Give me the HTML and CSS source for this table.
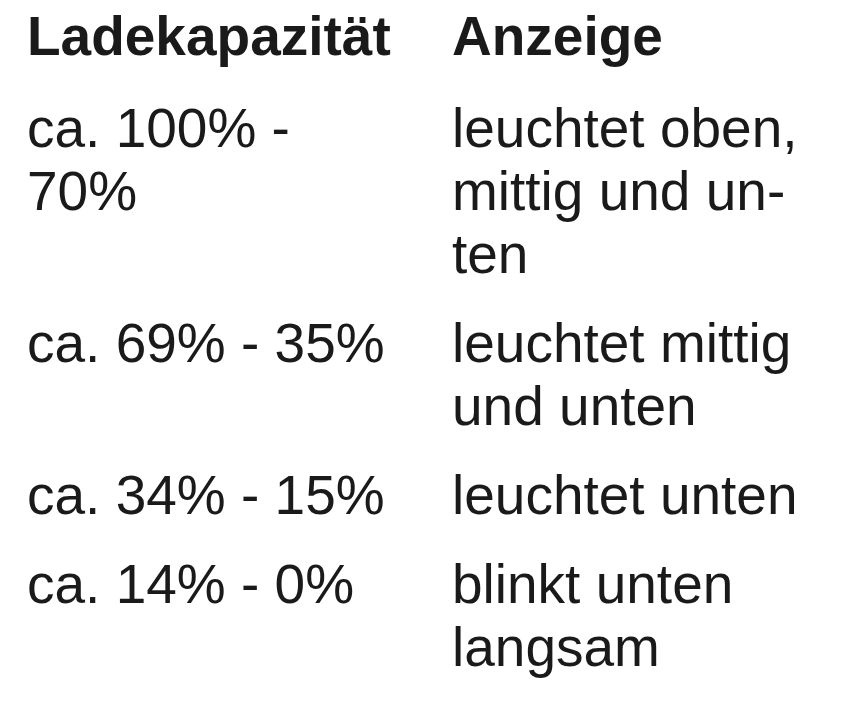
FILE: index.html
```html
<!DOCTYPE html>
<html lang="de">
<head>
<meta charset="utf-8">
<title>Ladekapazität</title>
<link rel="stylesheet" href="styles.css">
</head>
<body>
<div class="table">
  <div class="cell head">Ladekapazität</div>
  <div class="cell head">Anzeige</div>
  <div class="cell">ca. 100% - 70%</div>
  <div class="cell">leuchtet oben, mittig und un&shy;ten</div>
  <div class="cell">ca. 69% - 35%</div>
  <div class="cell">leuchtet mittig und unten</div>
  <div class="cell">ca. 34% - 15%</div>
  <div class="cell">leuchtet unten</div>
  <div class="cell">ca. 14% - 0%</div>
  <div class="cell">blinkt unten langsam</div>
</div>
</body>
</html>
```

FILE: styles.css
```css
html, body {
  margin: 0;
  padding: 0;
  background: #ffffff;
}

body {
  font-family: "Liberation Sans", Arial, sans-serif;
  color: #1a1a1a;
  font-size: 55px;
  line-height: 63px;
}

.table {
  display: grid;
  grid-template-columns: 380px 378px;
  column-gap: 45px;
  row-gap: 26px;
  padding: 5px 0 0 27px;
}

.cell {
  margin: 0;
}

.head {
  font-weight: bold;
  margin-bottom: 3px;
}
```
